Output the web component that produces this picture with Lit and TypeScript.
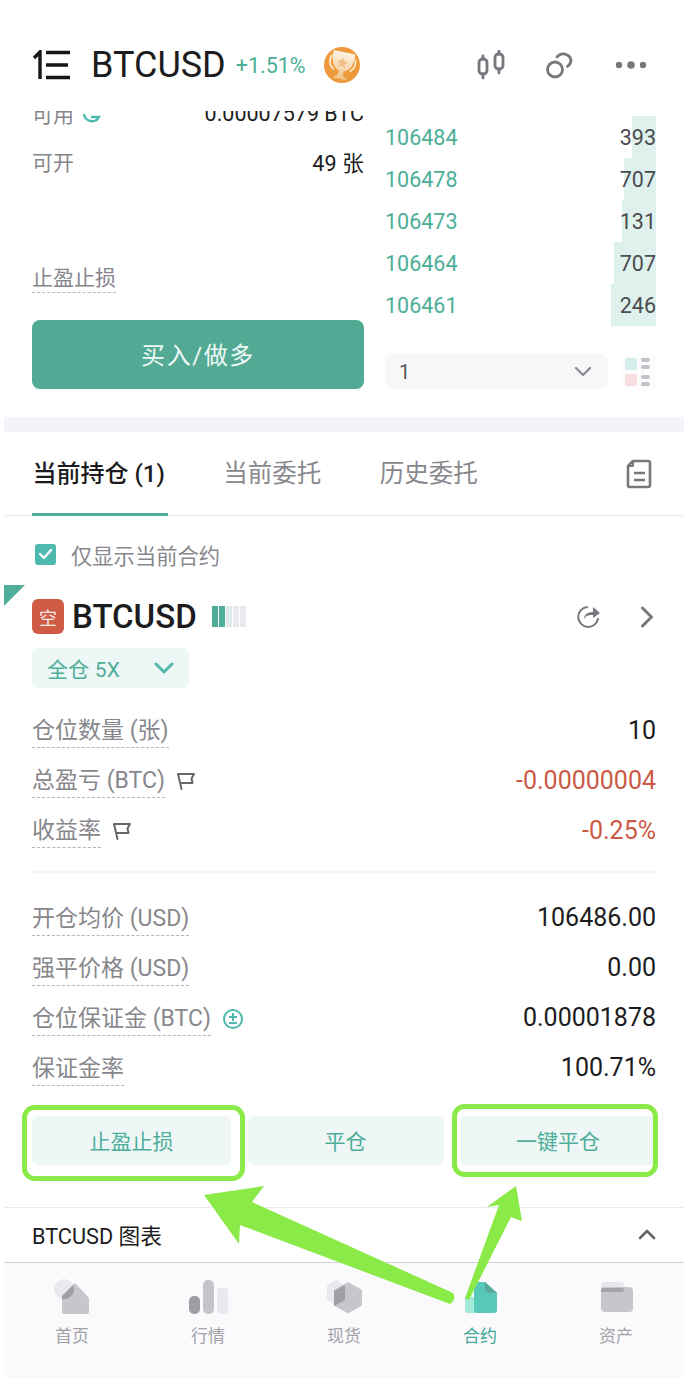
import { LitElement, html, css, svg } from "lit";
import { customElement } from "lit/decorators.js";

const flag = html`<svg class="flag" viewBox="0 0 20 20" fill="none" stroke="#66666c" stroke-width="2" stroke-linejoin="round" stroke-linecap="round"><path d="M5.500 18 2 3h16l-2.500 4.500 1 4.500H4.200"/></svg>`;
const book = [
  ["106484", "393", 24],
  ["106478", "707", 32],
  ["106473", "131", 34],
  ["106464", "707", 42],
  ["106461", "246", 45],
] as const;

const navIcons = [
  svg`<circle cx="12" cy="9" r="10" fill="#e8e8ee"/><path d="M10 32V16L23 3l14 15v14a2 2 0 0 1-2 2H12a2 2 0 0 1-2-2Z" fill="#c6c6cb"/><path d="M10 19v-3L21 5A10 10 0 0 1 10 19Z" fill="#9f9fa5"/>`,
  svg`<rect x="1" y="16" width="11" height="18" rx="5" fill="#9d9da3"/><rect x="15" y="0" width="11" height="34" rx="5" fill="#c4c4c9"/><rect x="29" y="8" width="11" height="26" rx="3" fill="#e8e8ee"/>`,
  svg`<path d="M12 1 20 6V19L12 25 4 19V6Z" fill="#e8e8ee" stroke="#e8e8ee" stroke-width="2" stroke-linejoin="round"/><path d="M24 3 37 10.500V25L24 32.500 11 25V10.500Z" fill="#c6c6cb" stroke="#c6c6cb" stroke-width="2" stroke-linejoin="round"/><path d="M10 11 21 5V20L10 26Z" fill="#9f9fa5"/>`,
  svg`<path d="M5 17h12v16H8a3 3 0 0 1-3-3Z" fill="#a3eada"/><path d="M14 5a3 3 0 0 1 3-3h8l12 11v17a3 3 0 0 1-3 3H17a3 3 0 0 1-3-3Z" fill="#57c9b8"/><path d="M25 2l12 11-7 0a5 5 0 0 1-5-5Z" fill="#5aa89c"/>`,
  svg`<rect x="5" y="2" width="23" height="14" rx="4" fill="#e6e6eb"/><rect x="5" y="7" width="32" height="25" rx="4" fill="#c6c6cb"/><path d="M5 10a2 2 0 0 1 2-2h19a2 2 0 0 1 2 2v0a2 2 0 0 1-2 2H5Z" fill="#a3a3a9"/>`,
];

@customElement("app-root")
export class AppRoot extends LitElement {
  static styles = css`
    :host {
      display: block;
      position: relative;
      width: 684px;
      height: 1378px;
      overflow: hidden;
      background: #fff;
      font-family: Roboto, "Noto Sans CJK SC", sans-serif;
      color: #1c1c20;
    }
    .header {
      height: 111px;
      display: flex;
      align-items: center;
      padding: 19px 37px 0 32px;
      box-sizing: border-box;
      background: #fff;
    }
    .menu { width: 40px; height: 30px; margin-right: 19px; }
    .pair { font-size: 36px; line-height: 40px; }
    .chg { font-size: 21.5px; color: #4dae97; margin-left: 10px; margin-right: 18px; }
    .cup { width: 36px; height: 36px; }
    .actions { margin-left: auto; display: flex; align-items: center; gap: 41px; }
    .actions svg { display: block; }
    .trade { height: 306px; display: flex; overflow: hidden; padding: 0 28px 0 32px; }
    .left { width: 332px; flex: none; margin-right: 22px; margin-top: -22px; }
    .info { height: 48px; display: flex; justify-content: space-between; align-items: center; font-size: 21px; color: #85858b; }
    .info b { font-weight: 400; color: #1c1c20; font-size: 21.5px; }
    .info .zhang { letter-spacing: 0.2px; }
    .refresh { width: 20px; height: 20px; margin-left: 8px; vertical-align: -3px; }
    .tpsl-l { margin-top: 69px; height: 48px; display: flex; align-items: center; }
    .tpsl-l span { font-size: 21px; color: #85858b; border-bottom: 1.5px dashed #b8b8bc; line-height: 28px; }
    .buy {
      margin-top: 18px; height: 69px; padding-bottom: 2px; box-sizing: border-box; border-radius: 8px; background: #52aa95; color: #eef8f5;
      display: flex; align-items: center; justify-content: center; font-size: 24px; letter-spacing: 1.6px;
    }
    .right { flex: 1; min-width: 0; padding-top: 5px; }
    .book-row { position: relative; height: 42px; display: flex; justify-content: space-between; align-items: center; font-size: 21.5px; color: #4b4b50; }
    .bar { position: absolute; right: 0; top: 0; bottom: 0; background: #dff1ec; }
    .price { position: relative; color: #4dae97; margin-left: -1px; }
    .qty { position: relative; }
    .depth-tools { margin-top: 28px; display: flex; align-items: center; justify-content: space-between; }
    .select {
      width: 223px; height: 35px; background: #f7f7fa; border-radius: 8px; display: flex; align-items: center;
      justify-content: space-between; padding: 0 16px 0 14px; box-sizing: border-box; font-size: 20px; color: #55555a; margin-left: -1px;
    }
    .band { margin-left: 4px; height: 15px; background: #f3f3f9; }
    .lower { margin-left: 4px; }
    .tabs {
      height: 84px; box-sizing: border-box; border-bottom: 1.5px solid #e9e9ec; display: flex; align-items: center;
      padding: 0 32px 0 28.500px; position: relative; font-size: 24.500px; color: #88888e; gap: 58.500px;
    }
    .tab { line-height: 84px; position: relative; }
    .tab.on { color: #1c1c20; font-weight: 500; font-size: 24px; }
    .tab.on::after { content: ""; position: absolute; left: -1px; right: -3px; bottom: 0; height: 3px; background: #4fae9a; }
    .doc { margin-left: auto; width: 26px; height: 30px; }
    .check { height: 69px; display: flex; align-items: center; padding: 7px 0 0 31px; box-sizing: border-box; font-size: 21.300px; color: #88888e; gap: 15px; }
    .box { width: 21px; height: 21px; border-radius: 3px; background: #4fb9ae; display: flex; align-items: center; justify-content: center; }
    .pos { position: relative; padding: 0 28px; }
    .corner { position: absolute; left: 0; top: 0; width: 21px; height: 21px; background: #4fae9a; clip-path: polygon(0 0, 100% 0, 0 100%); }
    .sym { height: 63px; display: flex; align-items: center; }
    .side { width: 32px; height: 35px; background: #cf5b45; color: #fbe9e4; border-radius: 6px; font-size: 18px; display: flex; align-items: center; justify-content: center; margin-right: 8px; }
    .name { font-weight: 500; font-size: 33px; margin-right: 15px; }
    .lev { display: flex; height: 21px; gap: 1px; }
    .lev i { width: 6px; background: #e9e9ef; }
    .lev i.f { background: #4fae9a; }
    .lev i.m { background: #dfe9e7; }
    .sym-r { margin-left: auto; display: flex; align-items: center; gap: 40px; margin-right: 2px; }
    .sym-r svg { display: block; }
    .chip {
      width: 157px; height: 40px; background: #edf7f6; border-radius: 6px; display: flex; align-items: center;
      justify-content: space-between; box-sizing: border-box; padding: 0 15px; font-size: 21px; color: #4fae9a; letter-spacing: 0.2px;
    }
    .rows { margin-top: 18px; }
    .row { height: 50px; display: flex; align-items: center; justify-content: space-between; }
    .lab { font-size: 23px; line-height: 33px; color: #87878d; border-bottom: 1.5px dashed #b4b4b9; display: inline-block; }
    .lab-w { display: flex; align-items: center; gap: 11px; }
    .flag { width: 20px; height: 20px; }
    .val { font-size: 25px; padding-bottom: 2px; }
    .red { color: #cb5a45; }
    .sep { height: 1.5px; background: #f5f5f7; margin: 15px 0 21px; }
    .plus { width: 22px; height: 22px; }
    .btns { margin-top: 22px; display: grid; grid-template-columns: 199px 196px 196px; column-gap: 16.500px; }
    .btn { height: 49px; border-radius: 6px; background: #eef7f6; color: #4fae9a; font-size: 21px; display: flex; align-items: center; justify-content: center; }
    .chart {
      margin-top: 42px; height: 55px; box-sizing: border-box; border-top: 1.5px solid #ebebee; display: flex; align-items: center;
      justify-content: space-between; padding: 0 28px; font-size: 21.700px; color: #1c1c20;
    }
    .nav {
      height: 116px; box-sizing: border-box; border-top: 1.5px solid #d0d0d4; background: #fafafc; display: grid; grid-template-columns: repeat(5, 1fr);
    }
    .item { display: flex; flex-direction: column; align-items: center; padding-top: 17px; font-size: 17px; line-height: 20px; color: #a2a2a8; }
    .item.on { color: #3fa896; }
    .item svg { width: 40px; height: 36px; display: block; margin-bottom: 10px; overflow: visible; }
    .overlay { position: absolute; left: 0; top: 0; width: 684px; height: 1378px; pointer-events: none; }
  `;

  render() {
    return html`
      <div class="header">
        <svg class="menu" viewBox="0 0 40 30">
          <path d="M2 8 8 2v27" fill="none" stroke="#16161a" stroke-width="3.400"/>
          <path d="M14 2.500h24M14 15h22M14 27.500h24" stroke="#16161a" stroke-width="3.600"/>
        </svg>
        <span class="pair">BTCUSD</span>
        <span class="chg">+1.51%</span>
        <svg class="cup" viewBox="0 0 36 36">
          <defs><linearGradient id="cg" x1="0" y1="0" x2="0" y2="1"><stop offset="0" stop-color="#fdf3e3"/><stop offset="1" stop-color="#f2c48c"/></linearGradient></defs>
          <circle cx="18" cy="18" r="18" fill="#ee9a3c"/>
          <g transform="rotate(12 18 18)">
            <path d="M7 5h22c1 10-2 17-8 19v4l5 4H11l5-4v-4C10 22 6 15 7 5Z" fill="url(#cg)"/>
            <path d="M6 10c-2 6 0 11 5 14M30 10c2 5 1 9-3 13" fill="none" stroke="#fbe7c9" stroke-width="1.800"/>
            <path d="m18 10 1.800 3.600 3.800.6-2.800 2.600.7 3.800-3.500-1.800-3.500 1.800.7-3.800-2.800-2.600 3.800-.6Z" fill="#f1c08a"/>
          </g>
        </svg>
        <div class="actions">
          <svg width="28" height="30" viewBox="0 0 28 30" fill="none" stroke="#77777d" stroke-width="2.800" stroke-linecap="round">
            <rect x="2" y="9" width="8" height="15" rx="3.500"/><path d="M6 6v3M6 24v4"/>
            <rect x="18" y="4" width="8" height="15" rx="3.500"/><path d="M22 1v3M22 19v4"/>
          </svg>
          <svg width="28" height="28" viewBox="0 0 28 28" fill="none" stroke="#77777d" stroke-width="2.800" stroke-linecap="round">
            <circle cx="9" cy="18.500" r="7.500"/><path d="M11 6a8 8 0 0 1 14 3c0 3-1.500 5-3.500 6.500"/>
          </svg>
          <svg width="32" height="10" viewBox="0 0 32 10" fill="#77777d"><circle cx="4" cy="5" r="3.200"/><circle cx="16" cy="5" r="3.800"/><circle cx="28" cy="5" r="3.200"/></svg>
        </div>
      </div>

      <div class="trade">
        <div class="left">
          <div class="info">
            <span>可用<svg class="refresh" viewBox="0 0 20 20" fill="none" stroke="#4fb9ae" stroke-width="2.400"><path d="M2 9a8 8 0 0 0 15 3H9"/><path d="M17 6A8 8 0 0 0 4 5"/></svg></span>
            <b>0.00007579 BTC</b>
          </div>
          <div class="info"><span>可开</span><b class="zhang">49 张</b></div>
          <div class="tpsl-l"><span>止盈止损</span></div>
          <div class="buy">买入/做多</div>
        </div>
        <div class="right">
          ${book.map(
            ([p, q, w]) => html`<div class="book-row">
              <div class="bar" style="width:${w}px"></div>
              <span class="price">${p}</span><span class="qty">${q}</span>
            </div>`
          )}
          <div class="depth-tools">
            <div class="select">
              <span>1</span>
              <svg width="18" height="11" viewBox="0 0 18 11" fill="none" stroke="#8c8c92" stroke-width="2.400" stroke-linecap="round" stroke-linejoin="round"><path d="m2 2 7 7 7-7"/></svg>
            </div>
            <svg width="34" height="34" viewBox="0 0 34 34">
              <rect width="34" height="34" fill="#fcfcfd"/>
              <rect x="3" y="3" width="12" height="12" rx="2" fill="#d5efed"/>
              <rect x="3" y="19" width="12" height="12" rx="2" fill="#f7dfe2"/>
              <g fill="#c2c2c8"><rect x="19" y="3" width="9" height="4" rx="2"/><rect x="19" y="10" width="9" height="4" rx="2"/><rect x="19" y="20" width="9" height="4" rx="2"/><rect x="19" y="27" width="9" height="4" rx="2"/></g>
            </svg>
          </div>
        </div>
      </div>

      <div class="band"></div>

      <div class="lower">
        <div class="tabs">
          <span class="tab on">当前持仓 (1)</span>
          <span class="tab">当前委托</span>
          <span class="tab">历史委托</span>
          <svg class="doc" viewBox="0 0 26 30" fill="none" stroke="#77777d" stroke-width="2.600" stroke-linejoin="round">
            <path d="M7 2h15a2 2 0 0 1 2 2v22a2 2 0 0 1-2 2H4a2 2 0 0 1-2-2V7Z"/>
            <path d="M7 2v5H2" stroke-width="2"/>
            <path d="M8 14h11M8 21h11"/>
          </svg>
        </div>

        <div class="check">
          <span class="box"><svg width="15" height="12" viewBox="0 0 15 12" fill="none" stroke="#fff" stroke-width="2.400" stroke-linecap="round" stroke-linejoin="round"><path d="m2 6 4 4 7-8"/></svg></span>
          <span>仅显示当前合约</span>
        </div>

        <div class="pos">
          <div class="corner"></div>
          <div class="sym">
            <span class="side">空</span>
            <span class="name">BTCUSD</span>
            <span class="lev"><i class="f"></i><i class="f"></i><i class="m"></i><i></i><i></i></span>
            <div class="sym-r">
              <svg width="24" height="24" viewBox="0 0 24 24" fill="none" stroke="#77777d" stroke-width="2" stroke-linecap="round"><path d="M11 2A10 10 0 1 0 22 14"/><path d="M8 14c0-4 3-7 9-7V2l7 6-7 5V10c-3 0-7 0-9 4Z" fill="#77777d" stroke="none"/></svg>
              <svg width="14" height="22" viewBox="0 0 14 22" fill="none" stroke="#77777d" stroke-width="3" stroke-linecap="round" stroke-linejoin="round"><path d="m2.500 2 9 9-9 9"/></svg>
            </div>
          </div>
          <div class="chip">
            <span>全仓 5X</span>
            <svg width="20" height="12" viewBox="0 0 20 12" fill="none" stroke="#4fb9ae" stroke-width="3" stroke-linecap="round" stroke-linejoin="round"><path d="m2 2 8 8 8-8"/></svg>
          </div>

          <div class="rows">
            <div class="row"><span class="lab">仓位数量 (张)</span><span class="val">10</span></div>
            <div class="row"><span class="lab-w"><span class="lab">总盈亏 (BTC)</span>${flag}</span><span class="val red">-0.00000004</span></div>
            <div class="row"><span class="lab-w"><span class="lab">收益率</span>${flag}</span><span class="val red">-0.25%</span></div>
            <div class="sep"></div>
            <div class="row"><span class="lab">开仓均价 (USD)</span><span class="val">106486.00</span></div>
            <div class="row"><span class="lab">强平价格 (USD)</span><span class="val">0.00</span></div>
            <div class="row"><span class="lab-w"><span class="lab">仓位保证金 (BTC)</span><svg class="plus" viewBox="0 0 22 22" fill="none" stroke="#4fb9ae" stroke-width="2"><circle cx="11" cy="11" r="9"/><path d="M7 9h8M11 5v8M7 15h8"/></svg></span><span class="val">0.00001878</span></div>
            <div class="row"><span class="lab">保证金率</span><span class="val">100.71%</span></div>
          </div>

          <div class="btns">
            <div class="btn">止盈止损</div>
            <div class="btn">平仓</div>
            <div class="btn">一键平仓</div>
          </div>
        </div>

        <div class="chart">
          <span>BTCUSD 图表</span>
          <svg width="18" height="11" viewBox="0 0 18 11" fill="none" stroke="#66666c" stroke-width="2.600" stroke-linecap="round" stroke-linejoin="round"><path d="m2 9 7-7 7 7"/></svg>
        </div>

        <div class="nav">
          ${["首页", "行情", "现货", "合约", "资产"].map(
            (t, i) => html`<div class="item ${i === 3 ? "on" : ""}"><svg viewBox="0 0 40 36">${navIcons[i]}</svg><span>${t}</span></div>`
          )}
        </div>
      </div>

      <svg class="overlay" viewBox="0 0 684 1378">
        <rect x="24.500" y="1107.500" width="218" height="71" rx="10" fill="none" stroke="#8aea47" stroke-width="5"/>
        <rect x="454.500" y="1106.500" width="201" height="68" rx="10" fill="none" stroke="#8aea47" stroke-width="5"/>
        <path d="M204 1195 264 1186 252 1202 453 1293Q457 1299 450 1304L240 1225 239 1244Z" fill="#8aea47"/>
        <path d="M516 1186 522 1221 511 1217 469 1300 465 1298 499 1205 487 1207Z" fill="#8aea47"/>
      </svg>
    `;
  }
}
